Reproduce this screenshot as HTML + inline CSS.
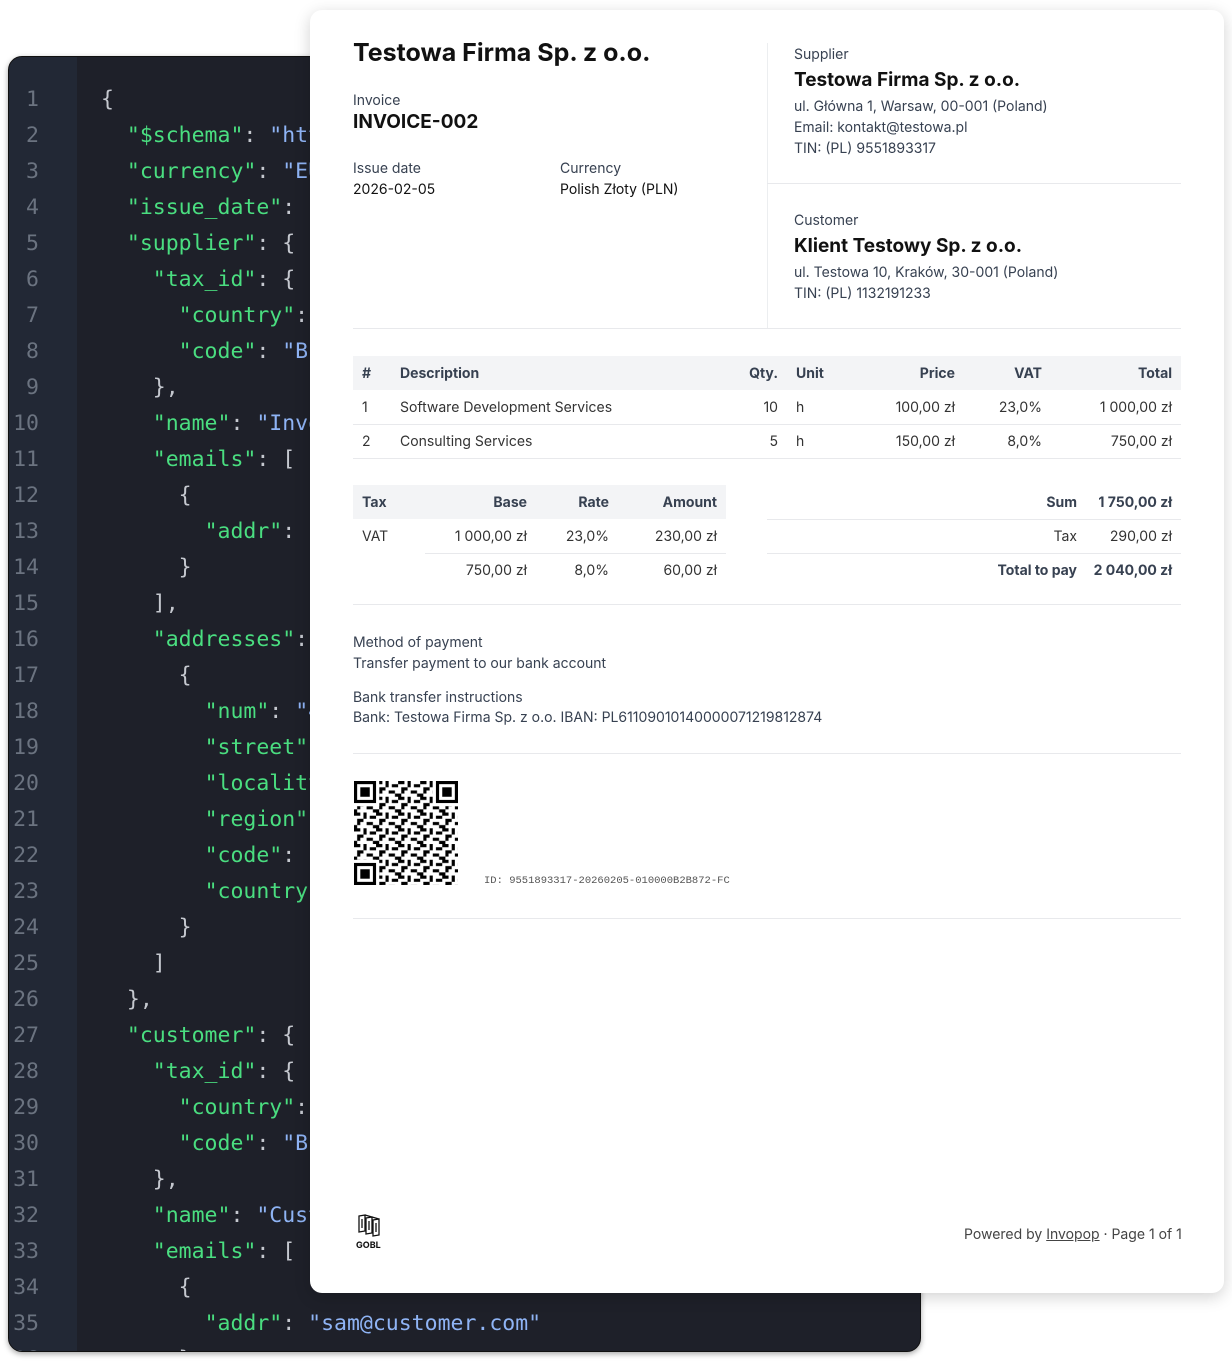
<!DOCTYPE html>
<html><head><meta charset="utf-8">
<style>
*{margin:0;padding:0;box-sizing:border-box}
body{width:1232px;height:1368px;background:#fff;position:relative;overflow:hidden;font-family:"Inter","Liberation Sans",sans-serif}
.code{position:absolute;left:8px;top:56px;width:913px;height:1296px;background:#1e2029;border-radius:14px;overflow:hidden;box-shadow:0 2px 6px rgba(0,0,0,.35);border:1px solid #111}
.gut{position:absolute;left:0;top:0;width:68px;height:100%;background:#222835}
.ln,.src{position:absolute;top:25px;font-family:"DejaVu Sans Mono","Liberation Mono",monospace;font-size:21.5px;line-height:36px;white-space:pre}
.ln{left:0;width:30px;text-align:right;color:#6b7380}
.src{left:92px;color:#c5c8cf}
.k{color:#4ade80}.s{color:#8fb4f5}
.inv{position:absolute;left:310px;top:10px;width:914px;height:1283px;background:#fff;border-radius:12px;box-shadow:0 4px 16px rgba(0,0,0,.18)}
.a{position:absolute;color:#1f2328;white-space:nowrap}
.lab{font-size:14px;color:#374151}
.val{font-size:14px;color:#111}
.hr{position:absolute;height:1px;background:#e8e9ec}
.th{position:absolute;background:#f3f4f6}
.t{position:absolute;font-size:14px;color:#333;white-space:nowrap}
.b{font-weight:bold;color:#374151}
.r{text-align:right}
</style></head><body>
<div class="code"><div class="gut"></div>
<div class="ln">1
2
3
4
5
6
7
8
9
10
11
12
13
14
15
16
17
18
19
20
21
22
23
24
25
26
27
28
29
30
31
32
33
34
35
36</div>
<div class="src">{
  <span class="k">"$schema"</span>: <span class="s">"https://gobl.org/draft-0/bill/invoice"</span>,
  <span class="k">"currency"</span>: <span class="s">"EUR"</span>,
  <span class="k">"issue_date"</span>: <span class="s">"2026-02-05"</span>,
  <span class="k">"supplier"</span>: {
    <span class="k">"tax_id"</span>: {
      <span class="k">"country"</span>: <span class="s">"PL"</span>,
      <span class="k">"code"</span>: <span class="s">"B1"</span>
    },
    <span class="k">"name"</span>: <span class="s">"Invopop"</span>,
    <span class="k">"emails"</span>: [
      {
        <span class="k">"addr"</span>: <span class="s">"x"</span>
      }
    ],
    <span class="k">"addresses"</span>: [
      {
        <span class="k">"num"</span>: <span class="s">"4"</span>,
        <span class="k">"street"</span>: <span class="s">"x"</span>,
        <span class="k">"locality"</span>: <span class="s">"x"</span>,
        <span class="k">"region"</span>: <span class="s">"x"</span>,
        <span class="k">"code"</span>: <span class="s">"x"</span>,
        <span class="k">"country"</span>: <span class="s">"x"</span>
      }
    ]
  },
  <span class="k">"customer"</span>: {
    <span class="k">"tax_id"</span>: {
      <span class="k">"country"</span>: <span class="s">"PL"</span>,
      <span class="k">"code"</span>: <span class="s">"B1"</span>
    },
    <span class="k">"name"</span>: <span class="s">"Customer"</span>,
    <span class="k">"emails"</span>: [
      {
        <span class="k">"addr"</span>: <span class="s">"sam@customer.com"</span>
      }</div>
</div>

<div class="inv">
<div class="a" style="left:43px;top:28px;font-size:25px;font-weight:bold;color:#111">Testowa Firma Sp. z o.o.</div>
<div class="a lab" style="left:43px;top:82px">Invoice</div>
<div class="a" style="left:43px;top:100px;font-size:19px;font-weight:bold;color:#111">INVOICE-002</div>
<div class="a lab" style="left:43px;top:150px">Issue date</div>
<div class="a val" style="left:43px;top:171px">2026-02-05</div>
<div class="a lab" style="left:250px;top:150px">Currency</div>
<div class="a val" style="left:250px;top:171px">Polish Złoty (PLN)</div>

<div style="position:absolute;left:457px;top:33px;width:1px;height:285px;background:#eceef0"></div>
<div class="a lab" style="left:484px;top:36px">Supplier</div>
<div class="a" style="left:484px;top:58px;font-size:19px;font-weight:bold;color:#111">Testowa Firma Sp. z o.o.</div>
<div class="a lab" style="left:484px;top:86px;line-height:21px">ul. Główna 1, Warsaw, 00-001 (Poland)<br>Email: kontakt@testowa.pl<br>TIN: (PL) 9551893317</div>
<div class="hr" style="left:457px;top:173px;width:414px"></div>
<div class="a lab" style="left:484px;top:202px">Customer</div>
<div class="a" style="left:484px;top:224px;font-size:19px;font-weight:bold;color:#111">Klient Testowy Sp. z o.o.</div>
<div class="a lab" style="left:484px;top:252px;line-height:21px">ul. Testowa 10, Kraków, 30-001 (Poland)<br>TIN: (PL) 1132191233</div>
<div class="hr" style="left:43px;top:318px;width:828px"></div>

<div class="th" style="left:43px;top:346px;width:828px;height:34px"></div>
<div class="t b" style="left:52px;top:355px">#</div>
<div class="t b" style="left:90px;top:355px">Description</div>
<div class="t b r" style="left:420px;width:48px;top:355px">Qty.</div>
<div class="t b" style="left:486px;top:355px">Unit</div>
<div class="t b r" style="left:545px;width:100px;top:355px">Price</div>
<div class="t b r" style="left:632px;width:100px;top:355px">VAT</div>
<div class="t b r" style="left:762px;width:100px;top:355px">Total</div>
<div class="t" style="left:52px;top:389px">1</div><div class="t" style="left:90px;top:389px">Software Development Services</div><div class="t r" style="left:420px;width:48px;top:389px">10</div><div class="t" style="left:486px;top:389px">h</div><div class="t r" style="left:545px;width:100px;top:389px">100,00 zł</div><div class="t r" style="left:632px;width:100px;top:389px">23,0%</div><div class="t r" style="left:762px;width:100px;top:389px">1 000,00 zł</div>
<div class="hr" style="left:43px;top:414px;width:828px"></div>
<div class="t" style="left:52px;top:423px">2</div><div class="t" style="left:90px;top:423px">Consulting Services</div><div class="t r" style="left:420px;width:48px;top:423px">5</div><div class="t" style="left:486px;top:423px">h</div><div class="t r" style="left:545px;width:100px;top:423px">150,00 zł</div><div class="t r" style="left:632px;width:100px;top:423px">8,0%</div><div class="t r" style="left:762px;width:100px;top:423px">750,00 zł</div>
<div class="hr" style="left:43px;top:448px;width:828px"></div>

<div class="th" style="left:43px;top:475px;width:373px;height:34px"></div>
<div class="t b" style="left:52px;top:484px">Tax</div>
<div class="t b r" style="left:117px;width:100px;top:484px">Base</div>
<div class="t b r" style="left:199px;width:100px;top:484px">Rate</div>
<div class="t b r" style="left:307px;width:100px;top:484px">Amount</div>
<div class="t" style="left:52px;top:518px">VAT</div><div class="t r" style="left:117px;width:100px;top:518px">1 000,00 zł</div><div class="t r" style="left:199px;width:100px;top:518px">23,0%</div><div class="t r" style="left:307px;width:100px;top:518px">230,00 zł</div>
<div class="hr" style="left:115px;top:543px;width:301px"></div>
<div class="t r" style="left:117px;width:100px;top:552px">750,00 zł</div><div class="t r" style="left:199px;width:100px;top:552px">8,0%</div><div class="t r" style="left:307px;width:100px;top:552px">60,00 zł</div>

<div class="t b r" style="left:667px;width:100px;top:484px">Sum</div><div class="t b r" style="left:762px;width:100px;top:484px">1 750,00 zł</div>
<div class="hr" style="left:457px;top:509px;width:414px"></div>
<div class="t r" style="left:667px;width:100px;top:518px">Tax</div><div class="t r" style="left:762px;width:100px;top:518px">290,00 zł</div>
<div class="hr" style="left:457px;top:543px;width:414px"></div>
<div class="t b r" style="left:617px;width:150px;top:552px">Total to pay</div><div class="t b r" style="left:762px;width:100px;top:552px">2 040,00 zł</div>
<div class="hr" style="left:43px;top:594px;width:828px"></div>

<div class="a lab" style="left:43px;top:624px">Method of payment</div>
<div class="a lab" style="left:43px;top:645px">Transfer payment to our bank account</div>
<div class="a lab" style="left:43px;top:679px">Bank transfer instructions</div>
<div class="a lab" style="left:43px;top:699px">Bank: Testowa Firma Sp. z o.o. IBAN: PL61109010140000071219812874</div>
<div class="hr" style="left:43px;top:743px;width:828px"></div>

<svg style="position:absolute;left:44px;top:771px" width="104" height="104" viewBox="0 0 33 33">
<defs><pattern id="p" width="7" height="5" patternUnits="userSpaceOnUse"><path d="M0 0h2v1H0zM3 0h1v2H3zM5 1h2v1H5zM1 2h1v2H1zM4 3h2v1H4zM0 4h1v1H0zM6 4h1v1H6zM2 2h1v1H2z" fill="#000"/></pattern></defs>
<rect width="33" height="33" fill="url(#p)"/>
<g fill="#fff"><rect width="8" height="8"/><rect x="25" width="8" height="8"/><rect y="25" width="8" height="8"/></g>
<g fill="none" stroke="#000"><rect x=".5" y=".5" width="6" height="6"/><rect x="26.5" y=".5" width="6" height="6"/><rect x=".5" y="26.5" width="6" height="6"/></g>
<g fill="#000"><rect x="2" y="2" width="3" height="3"/><rect x="28" y="2" width="3" height="3"/><rect x="2" y="28" width="3" height="3"/></g>
</svg>
<div class="a" style="left:174px;top:865px;font-family:'Liberation Mono',monospace;font-size:10.5px;color:#555">ID: 9551893317-20260205-010000B2B872-FC</div>
<div class="hr" style="left:43px;top:908px;width:828px"></div>

<svg style="position:absolute;left:46px;top:1203px" width="30" height="28" viewBox="0 0 30 28" fill="none" stroke="#111" stroke-width="1.3"><path d="M3 3l6-1v16l-6 1zM10 5l6-1v16l-6 1zM17 7l6-1v16l-6 1zM9 2l7 2M16 4l7 2M6 6v9M13 8v9M20 10v9"/></svg>
<div class="a" style="left:46px;top:1230px;font-size:9px;font-weight:bold;color:#111">GOBL</div>
<div class="a" style="left:654px;top:1216px;font-size:14px;color:#444">Powered by <span style="text-decoration:underline">Invopop</span> · Page 1 of 1</div>
</div>
</body></html>
